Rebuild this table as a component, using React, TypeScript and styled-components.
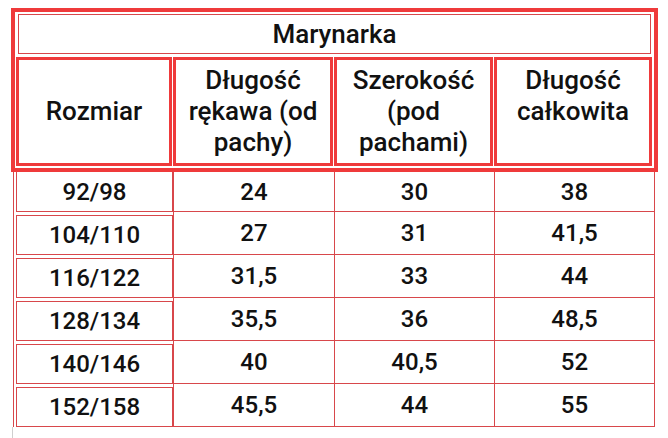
import styled, { createGlobalStyle } from 'styled-components'

interface SizeRow {
  size: string;
  sleeve: string;
  width: string;
  total: string;
}

const rows: SizeRow[] = [
  { size: '92/98', sleeve: '24', width: '30', total: '38' },
  { size: '104/110', sleeve: '27', width: '31', total: '41,5' },
  { size: '116/122', sleeve: '31,5', width: '33', total: '44' },
  { size: '128/134', sleeve: '35,5', width: '36', total: '48,5' },
  { size: '140/146', sleeve: '40', width: '40,5', total: '52' },
  { size: '152/158', sleeve: '45,5', width: '44', total: '55' },
]

export default function App() {
  return (
    <>
      <GlobalStyle />
      <Page>
        <Frame>
          <TitleCell>Marynarka</TitleCell>
          <HeaderRow>
            <HeaderCell $middle>Rozmiar</HeaderCell>
            <HeaderCell $middle>Długość<br />rękawa (od<br />pachy)</HeaderCell>
            <HeaderCell $middle>Szerokość<br />(pod<br />pachami)</HeaderCell>
            <HeaderCell>Długość<br />całkowita</HeaderCell>
          </HeaderRow>
        </Frame>

        <Table>
          {rows.map((row, i) => (
            <Row key={row.size} $first={i === 0}>
              <SizeSlot>
                <SizeBox $first={i === 0}>{row.size}</SizeBox>
              </SizeSlot>
              <Cell>{row.sleeve}</Cell>
              <Cell>{row.width}</Cell>
              <Cell>{row.total}</Cell>
            </Row>
          ))}
        </Table>
        <Tail />
      </Page>
    </>
  )
}

// styles
const THICK = '#ef3a3b'
const THIN = '#d8474b'

const GlobalStyle = createGlobalStyle`
  html, body {
    margin: 0;
    padding: 0;
    background: #fff;
  }
  body {
    font-family: Roboto, "Liberation Sans", sans-serif;
    color: #111;
  }
`

const Page = styled.div`
  width: 668px;
  height: 438px;
  box-sizing: border-box;
  padding: 8px 0 0 11px;
  background: #fff;
  overflow: hidden;
`

const Frame = styled.div`
  width: 647px;
  box-sizing: border-box;
  border: 4px solid ${THICK};
  padding: 2px 3px 2px 1px;
  display: flex;
  flex-direction: column;
`

const TitleCell = styled.div`
  height: 40px;
  box-sizing: border-box;
  margin-left: 2px;
  border: 1px solid ${THIN};
  display: flex;
  align-items: center;
  justify-content: center;
  font-size: 26px;
  font-weight: 500;
`

const HeaderRow = styled.div`
  margin-top: 3px;
  display: grid;
  grid-template-columns: 156px 160px 159px 158px;
  column-gap: 1px;
`

const HeaderCell = styled.div<{ $middle?: boolean }>`
  height: 109px;
  box-sizing: border-box;
  border: 3px solid ${THICK};
  display: flex;
  flex-direction: column;
  justify-content: ${(p) => (p.$middle ? 'center' : 'flex-start')};
  padding-top: ${(p) => (p.$middle ? '0' : '5px')};
  text-align: center;
  font-size: 26px;
  line-height: 31px;
  font-weight: 500;
`

const Table = styled.div`
  margin-left: 2px;
  width: 642px;
  box-sizing: border-box;
  border-left: 1px solid ${THIN};
  border-right: 1px solid ${THIN};
  display: flex;
  flex-direction: column;
`

const Row = styled.div<{ $first?: boolean }>`
  height: ${(p) => (p.$first ? '40px' : '43px')};
  display: grid;
  grid-template-columns: 159px 161px 160px 160px;
  font-size: 24px;
  font-weight: 500;
`

const SizeSlot = styled.div`
  display: flex;
  padding-left: 2px;
`

const SizeBox = styled.div<{ $first?: boolean }>`
  flex: 1;
  box-sizing: border-box;
  margin-top: ${(p) => (p.$first ? '0' : '3px')};
  border: 1px solid ${THIN};
  border-top-width: ${(p) => (p.$first ? '0' : '1px')};
  display: flex;
  align-items: center;
  justify-content: center;
`

const Cell = styled.div`
  box-sizing: border-box;
  border-left: 1px solid ${THIN};
  border-bottom: 1px solid ${THIN};
  display: flex;
  align-items: center;
  justify-content: center;
`

const Tail = styled.div`
  margin-left: 1px;
  width: 1px;
  height: 12px;
  background: #cfcfcf;
`
